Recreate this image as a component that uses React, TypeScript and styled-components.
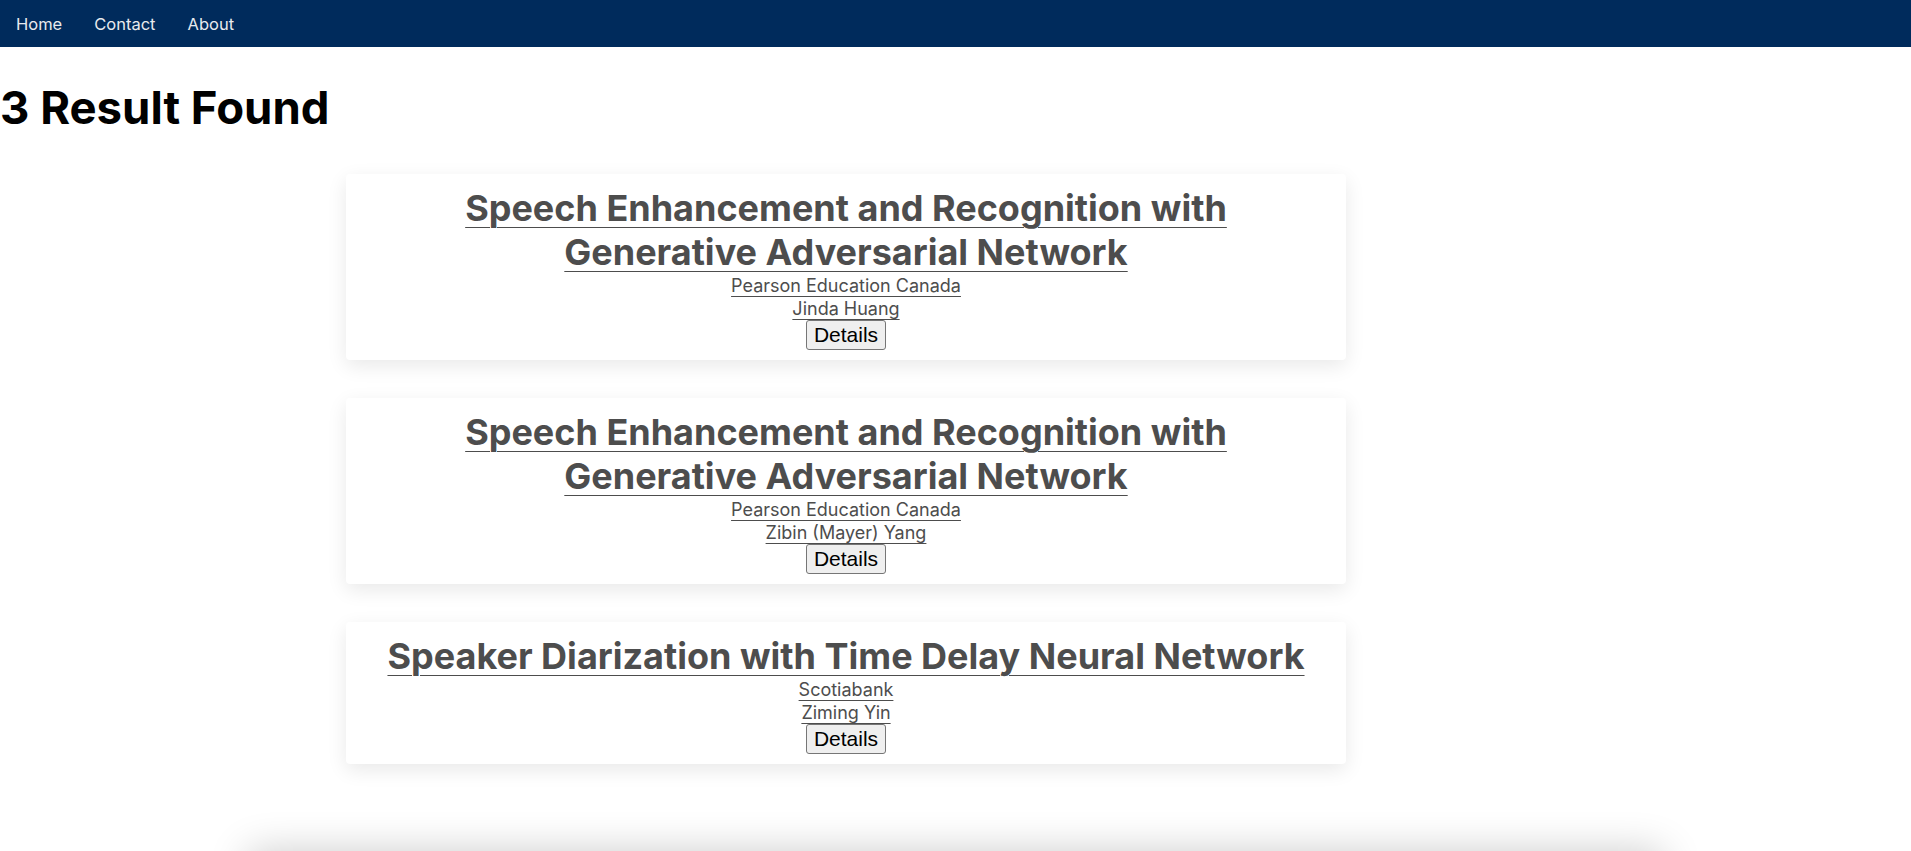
import React from 'react';
import styled, { createGlobalStyle } from 'styled-components';

const results = [
  {
    id: 1,
    title: 'Speech Enhancement and Recognition with Generative Adversarial Network',
    company: 'Pearson Education Canada',
    author: 'Jinda Huang',
  },
  {
    id: 2,
    title: 'Speech Enhancement and Recognition with Generative Adversarial Network',
    company: 'Pearson Education Canada',
    author: 'Zibin (Mayer) Yang',
  },
  {
    id: 3,
    title: 'Speaker Diarization with Time Delay Neural Network',
    company: 'Scotiabank',
    author: 'Ziming Yin',
  },
];

const App = () => {
  return (
    <>
      <GlobalStyle />
      <NavBar>
        <NavItem href="#">Home</NavItem>
        <NavItem href="#">Contact</NavItem>
        <NavItem href="#">About</NavItem>
      </NavBar>
      <Heading>{results.length} Result Found</Heading>
      <ResultList>
        {results.map((r) => (
          <Card key={r.id}>
            <Title href="#">{r.title}</Title>
            <SubLink href="#">{r.company}</SubLink>
            <SubLink href="#">{r.author}</SubLink>
            <DetailsButton>Details</DetailsButton>
          </Card>
        ))}
      </ResultList>
      <Footer />
    </>
  );
};

export default App;

const GlobalStyle = createGlobalStyle`
  body {
    margin: 0;
    background: #ffffff;
    font-family: Inter, "Noto Sans", sans-serif;
  }
`;

const NavBar = styled.nav`
  display: flex;
  align-items: center;
  height: 47px;
  background: #002b5c;
`;

const NavItem = styled.a`
  padding: 0 16px;
  font-size: 16.5px;
  color: #e8eaee;
  text-decoration: none;
  &:hover {
    cursor: pointer;
  }
`;

const Heading = styled.h1`
  margin: 33px 0 0;
  font-size: 45.5px;
  font-weight: 700;
  color: #000000;
`;

const ResultList = styled.div`
  display: flex;
  flex-direction: column;
  align-items: flex-start;
  gap: 38px;
  padding: 39px 0 0 346px;
`;

const Card = styled.div`
  display: flex;
  flex-direction: column;
  align-items: center;
  box-sizing: border-box;
  width: 1000px;
  padding: 12px 35px 10px;
  background: #ffffff;
  border-radius: 4px;
  box-shadow: 0 6px 20px rgba(0, 0, 0, 0.09);
  text-align: center;
`;

const Title = styled.a`
  font-size: 36px;
  font-weight: 700;
  color: #4d4d4d;
  text-decoration: underline;
  text-decoration-thickness: 1px;
  text-underline-offset: 6px;
`;

const SubLink = styled.a`
  font-size: 18px;
  line-height: 23px;
  color: #4d4d4d;
  text-decoration: underline;
  text-decoration-thickness: 1px;
  text-underline-offset: 4px;
`;

const DetailsButton = styled.button`
  padding: 2px 7px;
  font-family: "Liberation Sans", Arial, sans-serif;
  font-size: 21px;
  color: #000000;
  background: #efefef;
  border: 1px solid #767676;
  border-radius: 3px;
  &:hover {
    cursor: pointer;
  }
`;

const Footer = styled.footer`
  width: 74%;
  height: 120px;
  margin: 87px auto 0;
  background: #ffffff;
  box-shadow: 0 0 40px rgba(0, 0, 0, 0.2);
`;
